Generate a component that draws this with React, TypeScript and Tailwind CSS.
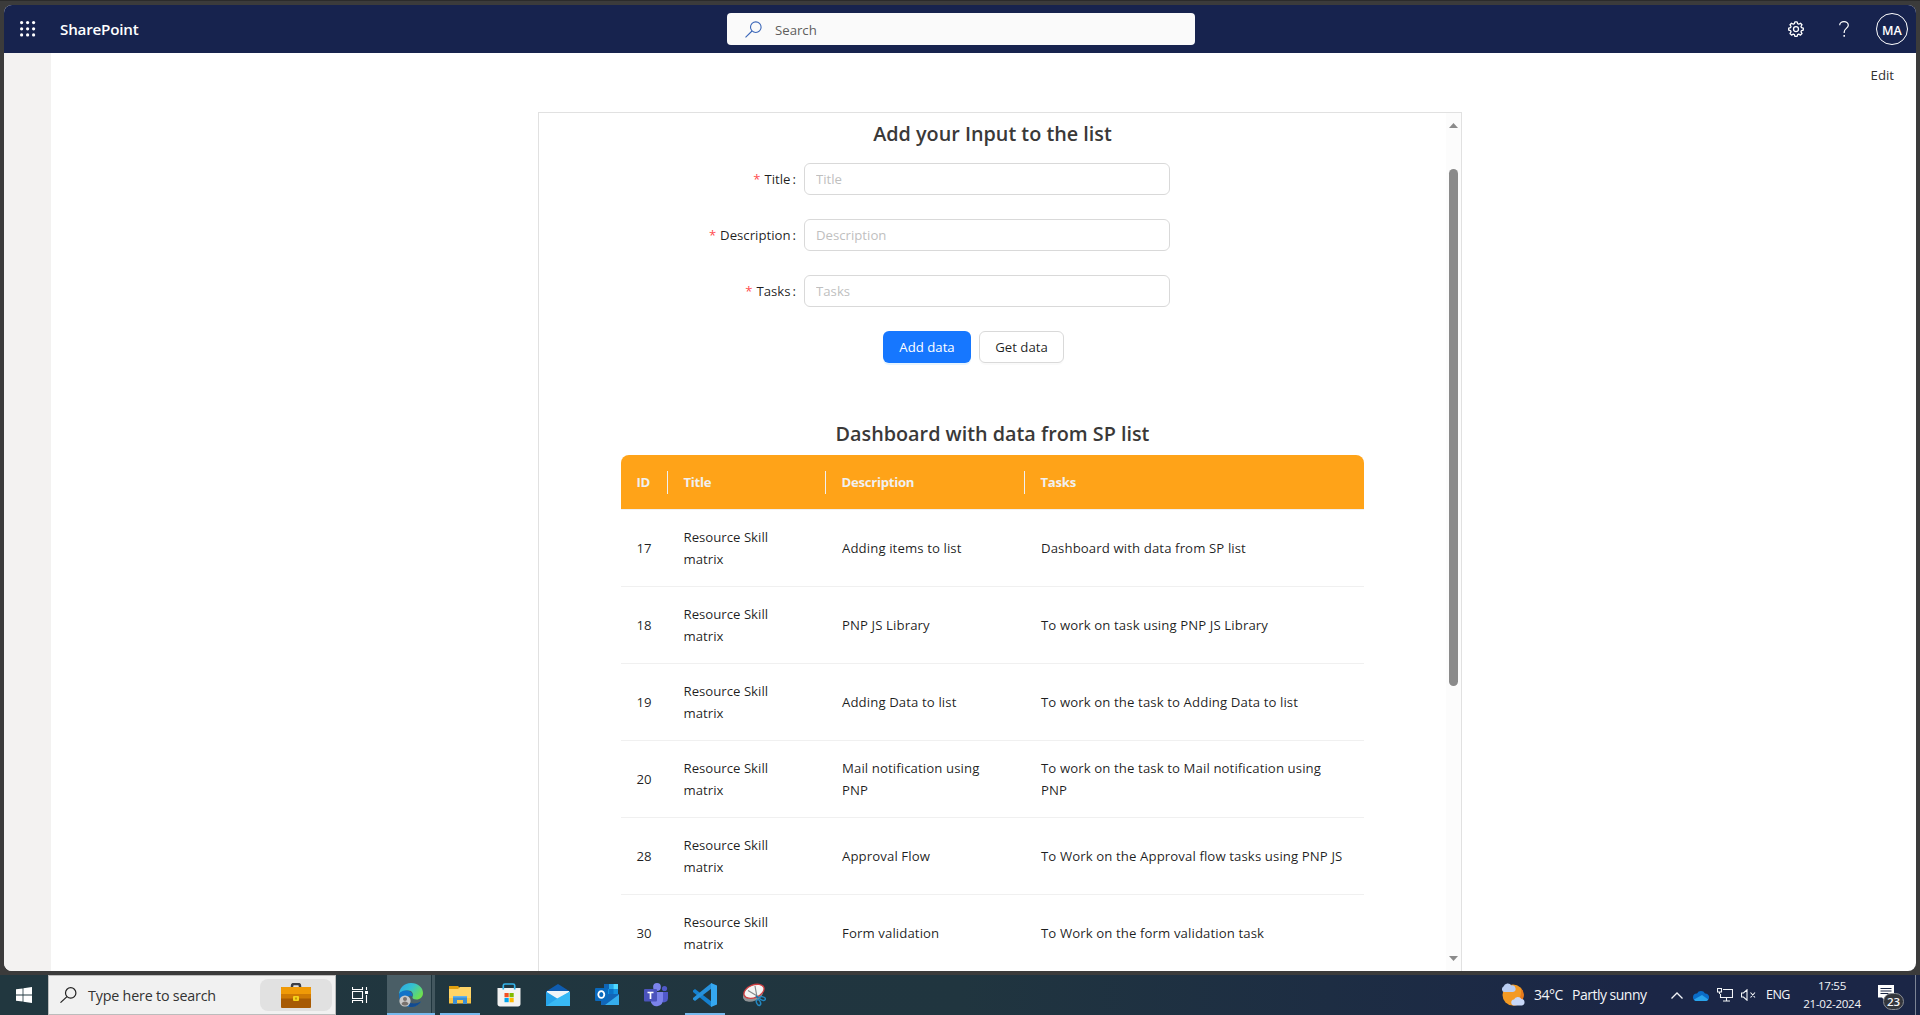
import React from "react";

const rows = [
  { id: "17", description: ["Adding items to list"], tasks: ["Dashboard with data from SP list"] },
  { id: "18", description: ["PNP JS Library"], tasks: ["To work on task using PNP JS Library"] },
  { id: "19", description: ["Adding Data to list"], tasks: ["To work on the task to Adding Data to list"] },
  { id: "20", description: ["Mail notification using", "PNP"], tasks: ["To work on the task to Mail notification using", "PNP"] },
  { id: "28", description: ["Approval Flow"], tasks: ["To Work on the Approval flow tasks using PNP JS"] },
  { id: "30", description: ["Form validation"], tasks: ["To Work on the form validation task"] },
];

function Header() {
  return (
    <header className="flex h-12 shrink-0 items-center bg-[#17234e] text-white">
      <div className="flex w-[710px] items-center">
        <svg className="ml-4 h-4 w-4" viewBox="0 0 16 16" fill="currentColor">
          {[1.6, 7.8, 13.9].map((y) =>
            [1.6, 7.6, 13.6].map((x) => <circle key={`${x}-${y}`} cx={x} cy={y} r="1.6" />)
          )}
        </svg>
        <span className="ml-6 text-[15.2px] leading-6 font-semibold tracking-[-0.2px]">SharePoint</span>
      </div>
      <div className="ml-[13px] flex h-8 w-[468px] items-center rounded bg-[#fafafa] text-[#605e5c]">
        <svg className="ml-[18px] h-[17px] w-[17px]" viewBox="0 0 17 17" fill="none" stroke="#3a66b8" strokeWidth="1.1">
          <circle cx="10.8" cy="6.2" r="5.3" />
          <path d="M7 10 .5 16.4" />
        </svg>
        <span className="ml-[13px] pt-[3px] text-[13.2px]">Search</span>
      </div>
      <div className="ml-auto flex items-center">
        <svg className="h-4 w-4" viewBox="0 0 16 16" fill="none" stroke="currentColor" strokeWidth="1.3" strokeLinejoin="round">
          <path d="M6.9.8h2.2l.5 1.9 1.1.5 1.8-1 1.5 1.5-1 1.8.5 1.2 1.8.4v2l-1.8.5-.5 1.2 1 1.7-1.5 1.6-1.8-1-1.1.5-.5 1.8H6.9l-.5-1.8-1.1-.5-1.8 1L2 12.5l1-1.7-.5-1.2L.7 9.1v-2l1.8-.4.5-1.2-1-1.8 1.5-1.5 1.8 1 1.1-.5z" />
          <circle cx="8" cy="8.1" r="2.5" />
        </svg>
        <svg className="ml-[35px] h-4 w-[10px]" viewBox="0 0 10 16" fill="none" stroke="currentColor" strokeWidth="1.2">
          <path d="M.7 4.3C.7 2 2.4.7 5 .7s4.3 1.4 4.3 3.6C9.3 7.3 5.2 7.6 5.2 11v1" />
          <path d="M5.2 14v1.7" strokeWidth="1.5" />
        </svg>
        <div className="mr-2 ml-[27px] flex h-8 w-8 items-center justify-center rounded-full border border-white pt-1 text-[12.5px] font-semibold">
          MA
        </div>
      </div>
    </header>
  );
}

function Field({ label }: { label: string }) {
  return (
    <div className="flex h-8 items-center">
      <label className="flex w-[265px] items-center justify-end pt-px text-[13.2px] text-black/88">
        <span className="mr-1 pt-px text-[13px] leading-none text-[#ff4d4f]">*</span>
        <span>{label}</span>
        <span className="mr-2 ml-0.5">:</span>
      </label>
      <input
        placeholder={label}
        className="h-8 w-[366px] rounded-md border border-[#d9d9d9] bg-white px-[11px] text-[13.2px] placeholder:text-[#bfbfbf]"
      />
    </div>
  );
}

const cell = "py-4 pr-4 pl-[15.5px] align-middle";
const wideCell = "py-4 pr-4 pl-4 align-middle tracking-[0.1px]";

function Lines({ lines }: { lines: string[] }) {
  return (
    <>
      {lines.map((line) => (
        <div key={line} className="whitespace-nowrap">
          {line}
        </div>
      ))}
    </>
  );
}

function ListTable() {
  return (
    <table className="mx-auto w-[743px] table-fixed border-separate border-spacing-0 text-left text-[13.2px] leading-[22px] text-black/88">
      <colgroup>
        <col className="w-[47px]" />
        <col className="w-[158px]" />
        <col className="w-[199px]" />
        <col className="w-[339px]" />
      </colgroup>
      <thead>
        <tr className="text-[#f0f0f0]">
          {["ID", "Title", "Description", "Tasks"].map((name, i) => (
            <th
              key={name}
              className="relative border-b border-[#f0f0f0] bg-[#ffa318] bg-clip-padding py-4 pr-4 pl-[15.5px] font-bold tracking-[-0.28px] first:rounded-tl-lg last:rounded-tr-lg"
            >
              {name}
              {i < 3 && <span className="absolute top-4 right-0 h-[23px] w-px bg-[#f0f0f0]" />}
            </th>
          ))}
        </tr>
      </thead>
      <tbody>
        {rows.map((row) => (
          <tr key={row.id} className="h-[77px] [&>td]:border-b [&>td]:border-[#f0f0f0]">
            <td className={cell}>{row.id}</td>
            <td className={cell}>
              <Lines lines={["Resource Skill", "matrix"]} />
            </td>
            <td className={wideCell}>
              <Lines lines={row.description} />
            </td>
            <td className={wideCell}>
              <Lines lines={row.tasks} />
            </td>
          </tr>
        ))}
      </tbody>
    </table>
  );
}

function Scrollbar() {
  return (
    <div className="flex w-[15px] shrink-0 flex-col items-center bg-[#fcfcfc]">
      <svg className="mt-[10px] h-[5px] w-[9px]" viewBox="0 0 9 5" fill="#8b8b8b">
        <path d="M4.5 0 9 5H0z" />
      </svg>
      <div className="mt-[41px] h-[517px] w-[9px] rounded-full bg-[#8b8b8b]" />
      <svg className="mt-auto mb-[10px] h-[5px] w-[9px]" viewBox="0 0 9 5" fill="#8b8b8b">
        <path d="M4.5 5 9 0H0z" />
      </svg>
    </div>
  );
}

function SectionTitle({ children }: { children: React.ReactNode }) {
  return <h2 className="text-center text-[19.8px] leading-8 font-semibold text-[#3a3938]">{children}</h2>;
}

function WebPart() {
  return (
    <section className="ml-[487px] flex min-h-0 w-[924px] flex-1 border border-b-0 border-[#e1e1e1]">
      <div className="min-w-0 flex-1 overflow-hidden pt-[5px]">
        <SectionTitle>Add your Input to the list</SectionTitle>
        <form className="mt-[13px] mb-[55px] flex flex-col gap-6">
          <Field label="Title" />
          <Field label="Description" />
          <Field label="Tasks" />
          <div className="ml-[344px] flex gap-2 text-[13.2px]">
            <button type="button" className="h-8 w-[88px] rounded-md bg-[#1677ff] pt-px text-white shadow-[0_2px_0_rgba(5,145,255,0.1)]">
              Add data
            </button>
            <button type="button" className="h-8 w-[85px] rounded-md border border-[#d9d9d9] bg-white pt-px text-black/88 shadow-[0_2px_0_rgba(0,0,0,0.02)]">
              Get data
            </button>
          </div>
        </form>
        <SectionTitle>Dashboard with data from SP list</SectionTitle>
        <div className="mt-[5px]">
          <ListTable />
        </div>
      </div>
      <Scrollbar />
    </section>
  );
}

function EdgeIcon() {
  return (
    <svg className="h-6 w-6" viewBox="0 0 24 24">
      <defs>
        <linearGradient id="edgeTop" x1="0" y1="0" x2="1" y2="0.6">
          <stop offset="0" stopColor="#2aa5e8" />
          <stop offset="0.5" stopColor="#35c1d0" />
          <stop offset="1" stopColor="#6ee04f" />
        </linearGradient>
      </defs>
      <path d="M0 12C0 5 5 0 12 0s12 4.5 12 10c0 4-3 6.5-6.5 6.5-3 0-4.5-1.2-4-2.5 1.5-3-.5-6.5-4-6.5C5 7.5.5 9 0 12z" fill="url(#edgeTop)" />
      <path d="M0 12c.5-3.5 4.5-5 8-4.5 3.5.3 6 3 5.5 6-3-2-6.5.5-5.5 4.5 1.5 4 8 5 14 .5C19.5 22 16 24 12 24 5 24 0 19 0 12z" fill="#1173c8" />
      <path d="M8 16c.5 4.5 8 6 14 2.5-2.5 4-7 6-11.5 5.5z" fill="#124b91" />
      <circle cx="6" cy="18" r="5.6" fill="#c9c9c9" />
      <circle cx="6" cy="16" r="2" fill="#77716d" />
      <path d="M2.5 21c.5-3.5 6.5-3.5 7 0-2 2-5 2-7 0z" fill="#77716d" />
    </svg>
  );
}

function ExplorerIcon() {
  return (
    <svg className="h-[18px] w-[22px]" viewBox="0 0 22 18">
      <path d="M0 0h9l1.5 1.5V5H0z" fill="#e0a010" />
      <path d="M0 3h9l2-2h11v16H0z" fill="#ffd467" />
      <path d="M0 12h22v5.5H0z" fill="#fbc544" />
      <path d="M4 18v-8h14v8h-4v-4H8v4z" fill="#3b8fd5" />
      <path d="M4 10h14v1.5H4z" fill="#63b2ec" />
    </svg>
  );
}

function StoreIcon() {
  return (
    <svg className="h-6 w-6" viewBox="0 0 24 24">
      <path d="M.5 5h23v16c0 1.500-1 2.500-2.500 2.500H3C1.500 23.500.5 22.500.5 21z" fill="#f2f2f2" />
      <path d="M6.3 6.500V2.500C6.3 1.500 7 1 8 1h8c1 0 1.700.5 1.700 1.500v4" fill="none" stroke="#35b4ea" strokeWidth="1.7" />
      <path d="M7.5 10h4.200v4.200H7.500z" fill="#f25022" />
      <path d="M12.5 10h4.200v4.200h-4.200z" fill="#7fba00" />
      <path d="M7.5 15h4.200v4.200H7.500z" fill="#00a4ef" />
      <path d="M12.5 15h4.200v4.200h-4.200z" fill="#ffb900" />
    </svg>
  );
}

function MailIcon() {
  return (
    <svg className="h-[22px] w-6" viewBox="0 0 24 22">
      <path d="M0 7.5 12 0l12 7.5V12H0z" fill="#0f5cb0" />
      <path d="M1 7h22v6l-11 5L1 13z" fill="#f1f4f8" />
      <path d="M0 7.5 12 15l12-7.5V22H0z" fill="#27a3ea" />
      <path d="M0 22 12 14l12-6.5V22z" fill="#38b9f5" />
    </svg>
  );
}

function OutlookIcon() {
  return (
    <svg className="h-6 w-6" viewBox="0 0 24 24">
      <path d="M9 1h14v12H9z" fill="#1490df" />
      <path d="M9 1h5v5H9z" fill="#0f64b4" />
      <path d="M14 1h4.5v5H14z" fill="#28a8ea" />
      <path d="M18.5 1H23v5h-4.5z" fill="#50d9ff" />
      <path d="M14 6h4.5v5H14z" fill="#0b73c8" />
      <path d="M6 11h18v11H6z" fill="#1266b8" />
      <path d="m24 11.5-14 10.5h14z" fill="#35aeee" />
      <rect y="5" width="13" height="13" rx="1" fill="#0a69bd" />
      <ellipse cx="6.3" cy="11.5" rx="3" ry="3.4" fill="none" stroke="#fff" strokeWidth="1.8" />
    </svg>
  );
}

function TeamsIcon() {
  return (
    <svg className="h-6 w-6" viewBox="0 0 24 24">
      <circle cx="20.5" cy="5.5" r="2.6" fill="#5059c9" />
      <circle cx="13" cy="4" r="3.9" fill="#7b83eb" />
      <path d="M17 9h7v6.5a4 4 0 0 1-7 2.5z" fill="#5059c9" />
      <path d="M7 9h12v8a6.3 6.3 0 0 1-12 2.5z" fill="#7b83eb" />
      <rect y="6" width="13" height="12.5" rx="1" fill="#4b53bc" />
      <path d="M3.5 9.5h6M6.5 9.5v6.5" stroke="#fff" strokeWidth="1.7" />
    </svg>
  );
}

function VsCodeIcon() {
  return (
    <svg className="h-6 w-6" viewBox="0 0 24 24">
      <path d="m0 7.5 2-1.6 16.5 12.6V24L0 9z" fill="#1580cf" />
      <path d="m0 16.5 2 1.6L18.5 5.5V0L0 15z" fill="#2691dc" />
      <path d="m18 0 6 2.5v19L18 24z" fill="#35a7f0" />
    </svg>
  );
}

function SnipIcon() {
  return (
    <svg className="h-6 w-6" viewBox="0 0 24 24">
      <ellipse cx="11" cy="11.5" rx="10.5" ry="6.5" transform="rotate(-22 11 11.5)" fill="#8f9396" />
      <ellipse cx="12" cy="8.3" rx="10.5" ry="6.3" transform="rotate(-22 12 8.3)" fill="#f5f5f5" stroke="#cf3f42" strokeWidth="1.3" />
      <path d="m6 7.5 10 6M13 3l2 11" stroke="#85898c" strokeWidth="1.2" fill="none" />
      <path d="m14 13 2.5 2" stroke="#1d72a8" strokeWidth="2" />
      <ellipse cx="20.5" cy="15.5" rx="3" ry="1.7" transform="rotate(15 20.5 15.5)" fill="none" stroke="#2388c2" strokeWidth="1.5" />
      <ellipse cx="16.5" cy="19.5" rx="1.9" ry="3" transform="rotate(-25 16.5 19.5)" fill="none" stroke="#2388c2" strokeWidth="1.5" />
    </svg>
  );
}

function TaskbarApp({ children, open }: { children: React.ReactNode; open?: boolean }) {
  return (
    <div className="flex h-10 w-[49px] flex-col items-center">
      <div className="flex h-[38px] w-full items-center justify-center pt-0.5">{children}</div>
      {open && <div className="h-0.5 w-10 bg-[#76b9ed]" />}
    </div>
  );
}

function SystemTray() {
  return (
    <div className="flex h-10 items-center text-[#f3f5f8]">
      <svg className="h-6 w-6" viewBox="0 0 24 24">
        <circle cx="12" cy="12" r="10.5" fill="#f39a24" />
        <path d="M20 5a10.5 10.5 0 0 1-9 17.5C17 20 21 14 20 5z" fill="#e67a1c" />
        <path d="M3 9a3 3 0 0 1-.5-5.5A4.5 4.5 0 0 1 10.5 2.5 3.3 3.3 0 0 1 12 9z" fill="#b9cdf2" />
        <path d="M13.5 22.5a3 3 0 0 1-.5-6 4.2 4.2 0 0 1 7.5-.5 3.3 3.3 0 0 1 .5 6.5z" fill="#c8d7f7" />
      </svg>
      <span className="ml-[9px] w-[38px] text-sm tracking-[-0.5px]">34°C</span>
      <span className="w-[76px] text-sm tracking-[-0.5px] whitespace-nowrap">Partly sunny</span>
      <svg className="ml-[23px] h-[7px] w-3" viewBox="0 0 12 7" fill="none" stroke="currentColor" strokeWidth="1.3">
        <path d="m.5 6.5 5.5-5.5 5.5 5.5" />
      </svg>
      <svg className="ml-[10px] h-[11px] w-4" viewBox="0 0 16 11">
        <path d="M4 3.5A4.5 4.5 0 0 1 12 3.5a3.7 3.7 0 0 1 3.3 6C14.5 11 13 11 12.5 11h-9A3.7 3.7 0 0 1 4 3.5z" fill="#0a6cc8" />
        <path d="m1 9.5 8-4.5 6.3 4.5c-.8 1.5-2 1.5-2.8 1.5h-9C2.5 11 1.5 10.500 1 9.5z" fill="#2aa4ec" />
      </svg>
      <svg className="ml-2 h-[14px] w-4" viewBox="0 0 16 14" fill="none" stroke="currentColor" strokeWidth="1.1">
        <path d="M6 1.5h9.5v8H3.5V6M.5.5h4V4h-4zM2.5 4v2M9.5 9.5v3M6 13h7" />
      </svg>
      <svg className="ml-2 h-3 w-[15px]" viewBox="0 0 15 12" fill="none" stroke="currentColor" strokeWidth="1.1">
        <path d="M.5 4h2L6 .8v10.4L2.5 8h-2zM9.5 3.5l4.5 5M14 3.5l-4.5 5" />
      </svg>
      <span className="ml-[10px] w-[25px] text-[12.5px] tracking-[-0.5px]">ENG</span>
      <div className="ml-[10px] flex w-[62px] flex-col items-center text-[11.6px] leading-[18px] tracking-[-0.3px] whitespace-nowrap">
        <span>17:55</span>
        <span>21-02-2024</span>
      </div>
      <div className="relative ml-[15px] h-7 w-[27px]">
        <svg className="absolute top-1 left-0 h-4 w-4" viewBox="0 0 16 16">
          <path d="M0 0h16v12.5H7V16l-3-3.5H0z" fill="#fff" />
          <path d="M2.5 3.5h11M2.5 6h11M2.5 8.5h8" stroke="#1b2744" strokeWidth="1" />
        </svg>
        <span className="absolute top-3 left-[5px] flex h-[17px] w-[21px] items-center justify-center rounded-full border border-[#8a8d94] bg-[#33363c] text-[11.5px] font-semibold">23</span>
      </div>
      <div className="ml-[10px] h-10 w-px bg-[#7c8494]" />
      <div className="w-1" />
    </div>
  );
}

function Taskbar() {
  return (
    <footer className="flex h-10 shrink-0 items-center bg-linear-to-r from-[#21373f] from-0% via-[#20353f] via-50% to-[#1b2646] to-85%">
      <div className="flex w-12 items-center justify-center">
        <svg className="h-4 w-4" viewBox="0 0 16 16" fill="#fff">
          <path d="M0 2.3 6.6 1.4v6.2H0zM7.4 1.2 16 0v7.6H7.4zM0 8.4h6.6v6.2L0 13.7zM7.4 8.4H16V16l-8.6-1.2z" />
        </svg>
      </div>
      <div className="flex h-10 w-72 items-center border border-[#bcbcbc] bg-[#f1f1f1] text-[#333]">
        <svg className="ml-[11px] h-4 w-[17px]" viewBox="0 0 17 16" fill="none" stroke="#222" strokeWidth="1.2">
          <circle cx="10.7" cy="5.9" r="5.2" />
          <path d="M7 9.6.5 15.6" />
        </svg>
        <span className="ml-[11px] pt-0.5 text-[14.3px] tracking-[-0.19px] whitespace-nowrap">Type here to search</span>
        <div className="mr-[3px] ml-auto flex h-8 w-[72px] items-center justify-center rounded-lg bg-[#e1e1e1]">
          <svg className="h-[25px] w-[30px]" viewBox="0 0 30 25">
            <path d="M11 5V3q0-2 2-2h4q2 0 2 2v2" fill="none" stroke="#3b3d44" strokeWidth="2.5" />
            <rect y="4" width="30" height="21" rx="1" fill="#a75a04" />
            <path d="M0 5q0-1 1-1h28q1 0 1 1v10H0z" fill="#f09a07" />
            <path d="M0 11h30v4.5H0z" fill="#cf7a04" />
            <rect x="12" y="13" width="6" height="5" rx="1" fill="#f5d21a" />
            <rect x="14" y="14.5" width="2" height="2" fill="#c69609" />
          </svg>
        </div>
      </div>
      <svg className="ml-4 h-4 w-4" viewBox="0 0 16 16" fill="none" stroke="#fff" strokeWidth="1.1">
        <path d="M.5 0v2.5h10V0M.5 16v-2.5h10V16M.5 4.5h10v7H.5zM14.5 0v3M14.5 8v8" />
        <path d="M13 4h3v3h-3z" fill="#fff" stroke="none" />
      </svg>
      <div className="ml-[19px] flex h-10 w-12 flex-col">
        <div className="flex h-[38px]">
          <div className="flex w-11 items-center justify-center bg-[#4a5e66] pt-0.5 pl-1">
            <EdgeIcon />
          </div>
          <div className="ml-px w-[3px] bg-[#43575f]" />
        </div>
        <div className="h-0.5 bg-[#76b9ed]" />
      </div>
      <div className="flex">
        <TaskbarApp open><ExplorerIcon /></TaskbarApp>
        <TaskbarApp><StoreIcon /></TaskbarApp>
        <TaskbarApp><MailIcon /></TaskbarApp>
        <TaskbarApp><OutlookIcon /></TaskbarApp>
        <TaskbarApp><TeamsIcon /></TaskbarApp>
        <TaskbarApp open><VsCodeIcon /></TaskbarApp>
        <TaskbarApp><SnipIcon /></TaskbarApp>
      </div>
      <div className="ml-auto">
        <SystemTray />
      </div>
    </footer>
  );
}

export default function App() {
  return (
    <div className="flex h-[1015px] w-[1920px] flex-col overflow-hidden bg-[#3b3b3b] font-['Open_Sans',sans-serif]">
      <div className="h-px shrink-0 bg-[#2b2b2b]" />
      <div className="mx-1 mt-1 mb-1 flex min-h-0 flex-1 flex-col overflow-hidden rounded-lg bg-white">
        <Header />
        <main className="flex min-h-0 flex-1">
          <aside className="w-[47px] shrink-0 bg-[#f3f2f1]" />
          <div className="flex flex-1 flex-col">
            <div className="flex h-[59px] shrink-0 justify-end pt-3 pr-[22px] text-[13.2px] leading-5 text-[#323130]">Edit</div>
            <WebPart />
          </div>
        </main>
      </div>
      <Taskbar />
    </div>
  );
}
